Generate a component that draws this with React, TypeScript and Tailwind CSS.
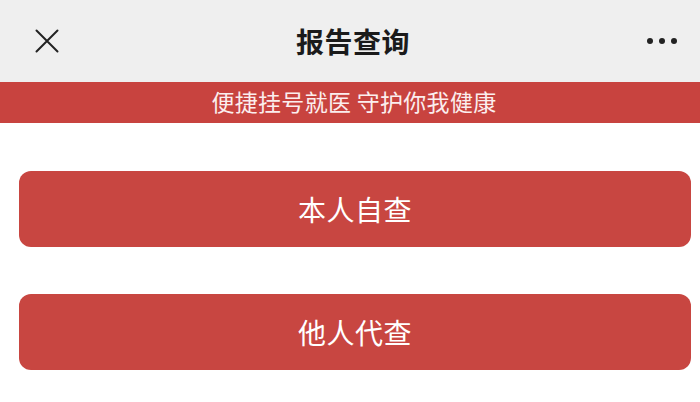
import React from 'react';

const font = { fontFamily: '"Noto Sans CJK SC", "Noto Sans", sans-serif' };

export default function App() {
  return (
    <div className="w-[700px] h-[402px] bg-white overflow-hidden" style={font}>
      <div className="h-[82px] bg-[#efefef] flex items-center justify-between pl-[35px] pr-[23px]">
        <svg width="24" height="24" viewBox="0 0 24 24" className="text-[#222]">
          <path d="M1.5 1.5 L22.5 22.5 M22.5 1.5 L1.5 22.5" stroke="currentColor" strokeWidth="2" strokeLinecap="round" />
        </svg>
        <h1 className="text-[28px] font-bold text-[#1b1b1b] leading-none tracking-[0.5px] -mt-[1px]">报告查询</h1>
        <div className="flex items-center gap-[6px] w-[30px]">
          <span className="w-[6px] h-[6px] rounded-full bg-[#222]" />
          <span className="w-[6px] h-[6px] rounded-full bg-[#222]" />
          <span className="w-[6px] h-[6px] rounded-full bg-[#222]" />
        </div>
      </div>
      <div className="h-[41px] bg-[#c8433f] flex items-center justify-center pl-[8px]">
        <p className="text-[23px] text-[#fbeeee] leading-none tracking-[0.3px] -mt-[2px]">便捷挂号就医 守护你我健康</p>
      </div>
      <div className="flex flex-col gap-[47px] pt-[48px] pl-[19px] pr-[9px]">
        <button className="h-[76px] rounded-[12px] bg-[#c84641] text-white text-[28px] tracking-[0.5px] flex items-center justify-center">
          本人自查
        </button>
        <button className="h-[76px] rounded-[12px] bg-[#c84641] text-white text-[28px] tracking-[0.5px] flex items-center justify-center">
          他人代查
        </button>
      </div>
    </div>
  );
}
